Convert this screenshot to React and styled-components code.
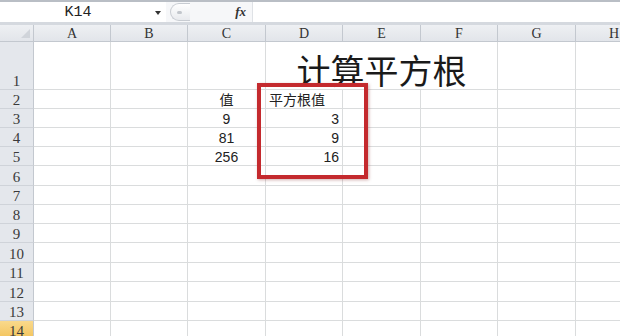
import React from 'react';
import styled, { createGlobalStyle } from 'styled-components';

const GlobalStyle = createGlobalStyle`
  html, body {
    margin: 0;
    padding: 0;
    background: #ffffff;
    overflow: hidden;
  }
`;

const Page = styled.div`
  width: 620px;
  height: 336px;
  display: flex;
  flex-direction: column;
  overflow: hidden;
  border-top: 2px solid #b9bec5;
  box-sizing: border-box;
`;

const FormulaBar = styled.div`
  flex-shrink: 0;
  height: 20px;
  display: flex;
  align-items: stretch;
  background: #f6f7f9;
  border-bottom: 3px solid #d5d9df;
`;

const NameBox = styled.div`
  width: 166px;
  position: relative;
  display: flex;
  align-items: center;
  justify-content: center;
  background: #ffffff;
  font-family: "Liberation Mono", "DejaVu Sans Mono", monospace;
  font-size: 15px;
  color: #222;
  padding-right: 10px;
  box-sizing: border-box;
`;

const DropArrow = styled.span`
  position: absolute;
  right: 5px;
  top: 9px;
  width: 0;
  height: 0;
  border-left: 3px solid transparent;
  border-right: 3px solid transparent;
  border-top: 4px solid #333;
`;

const Middle = styled.div`
  width: 86px;
  display: flex;
  align-items: center;
  justify-content: space-between;
  padding: 0 6px 0 4px;
  box-sizing: border-box;
`;

const Grip = styled.div`
  width: 20px;
  height: 18px;
  border-radius: 9px 0 0 9px;
  border: 1px solid #c8ccd2;
  border-right: none;
  background: linear-gradient(#ffffff, #e8eaee);
  display: flex;
  align-items: center;
  padding-left: 6px;
  box-sizing: border-box;

  &::after {
    content: '';
    width: 5px;
    height: 3px;
    border-radius: 2px;
    background: #c2c6cc;
  }
`;

const Fx = styled.span`
  font-family: "Liberation Serif", serif;
  font-style: italic;
  font-weight: bold;
  font-size: 13px;
  color: #333;
`;

const FormulaInput = styled.div`
  flex: 1;
  background: #ffffff;
  border-left: 1px solid #dfe2e6;
`;

const Sheet = styled.div`
  flex-shrink: 0;
  position: relative;
  display: grid;
  grid-template-columns: 34px 77px 77px 78px 77px 78px 77px 78px 77px;
  grid-template-rows: 17px 48px 19px 19px 19px 19px 20px 19px 19px 19px 20px 19px 20px 19px 19px;
`;

const Corner = styled.div`
  background: linear-gradient(#eef0f3, #e2e5ea);
  border-right: 1px solid #c3c8cf;
  border-bottom: 1px solid #c3c8cf;
  position: relative;

  &::after {
    content: '';
    position: absolute;
    right: 3px;
    bottom: 3px;
    width: 0;
    height: 0;
    border-left: 9px solid transparent;
    border-bottom: 9px solid #d0d4da;
  }
`;

const ColHead = styled.div`
  background: linear-gradient(#eef0f3, #e2e5ea);
  border-right: 1px solid #c3c8cf;
  border-bottom: 1px solid #c3c8cf;
  display: flex;
  align-items: flex-end;
  justify-content: center;
  font-family: "Liberation Serif", serif;
  font-size: 14px;
  line-height: 15px;
  color: #333;
`;

const RowHead = styled.div`
  background: ${p => (p.$active ? 'linear-gradient(#f9d98c, #f3c35a)' : '#e4e7ec')};
  border-right: 1px solid #c3c8cf;
  border-bottom: 1px solid ${p => (p.$active ? '#e0a93d' : '#cfd3d9')};
  display: flex;
  align-items: flex-end;
  justify-content: center;
  font-family: "Liberation Serif", serif;
  font-size: 15px;
  line-height: 16px;
  color: #3a3a3a;
`;

const Cell = styled.div`
  border-right: 1px solid #dadcdd;
  border-bottom: 1px solid #dadcdd;
  display: flex;
  align-items: flex-end;
  justify-content: ${p => p.$align || 'flex-start'};
  padding: 0 3px;
  font-family: "Liberation Sans", "Noto Sans CJK SC", sans-serif;
  font-size: 14px;
  line-height: 16px;
  color: #222;
  white-space: nowrap;
  box-sizing: border-box;
`;

const TitleCell = styled(Cell)`
  grid-column: span 3;
  justify-content: center;
  font-family: "Noto Sans CJK SC", sans-serif;
  font-size: 34px;
  line-height: 38px;
  color: #1a1a1a;
`;

const Highlight = styled.div`
  position: absolute;
  left: 257px;
  top: 58px;
  width: 111px;
  height: 96px;
  border: 4px solid #c42a2e;
  box-sizing: border-box;
  box-shadow: 1px 1px 3px rgba(120, 30, 30, 0.35);
  pointer-events: none;
`;

const columns = ['A', 'B', 'C', 'D', 'E', 'F', 'G', 'H'];

const data = {
  2: { C: ['值', 'center'], D: ['平方根值', 'flex-start'] },
  3: { C: ['9', 'center'], D: ['3', 'flex-end'] },
  4: { C: ['81', 'center'], D: ['9', 'flex-end'] },
  5: { C: ['256', 'center'], D: ['16', 'flex-end'] },
};

const renderRow = (r) => {
  const cells = [<RowHead key="h" $active={r === 14}>{r}</RowHead>];
  if (r === 1) {
    cells.push(<Cell key="A" />, <Cell key="B" />, <Cell key="C" />);
    cells.push(<TitleCell key="D">计算平方根</TitleCell>);
    cells.push(<Cell key="G" />, <Cell key="H" />);
    return cells;
  }
  columns.forEach((c) => {
    const v = data[r] && data[r][c];
    cells.push(
      <Cell key={c} $align={v ? v[1] : undefined}>
        {v ? v[0] : ''}
      </Cell>
    );
  });
  return cells;
};

const App = () => {
  const rows = Array.from({ length: 14 }, (_, i) => i + 1);
  return (
    <>
      <GlobalStyle />
      <Page>
        <FormulaBar>
          <NameBox>
            K14
            <DropArrow />
          </NameBox>
          <Middle>
            <Grip />
            <Fx>fx</Fx>
          </Middle>
          <FormulaInput />
        </FormulaBar>
        <Sheet>
          <Corner />
          {columns.map(c => <ColHead key={c}>{c}</ColHead>)}
          {rows.map(renderRow)}
          <Highlight />
        </Sheet>
      </Page>
    </>
  );
};

export default App;
